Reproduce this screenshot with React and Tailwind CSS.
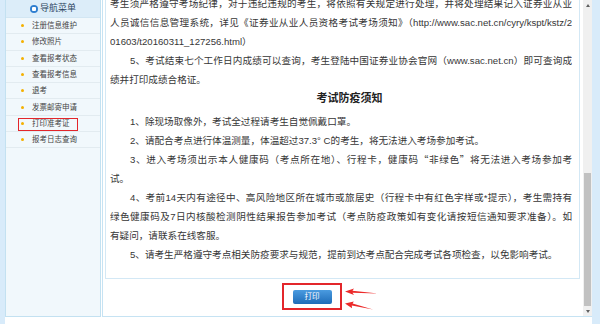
const menu = ['注册信息维护', '修改照片', '查看报考状态', '查看报考信息', '退考', '发票邮寄申请', '打印准考证', '报考日志查询'];

// [text, indent, justify]
const lines = [
  ['考生须严格遵守考场纪律，对于违纪违规的考生，将依照有关规定进行处理，并将处理结果记入证券业从业', false, true],
  ['人员诚信信息管理系统，详见《证券业从业人员资格考试考场须知》（http://www.sac.net.cn/cyry/kspt/kstz/2', false, true],
  ['01603/t20160311_127256.html）', false, false],
  ['5、考试结束七个工作日内成绩可以查询，考生登陆中国证券业协会官网（www.sac.net.cn）即可查询成', true, true],
  ['绩并打印成绩合格证。', false, false],
];

const lines2 = [
  ['1、除现场取像外，考试全过程请考生自觉佩戴口罩。', true, false],
  ['2、请配合考点进行体温测量，体温超过37.3° C的考生，将无法进入考场参加考试。', true, false],
  [<>3、进入考场须出示本人健康码（考点所在地）、行程卡，健康码<span style={{ fontFamily: '"Noto Sans CJK SC", sans-serif' }}>“非绿色”</span>将无法进入考场参加考</>, true, true],
  ['试。', false, false],
  ['4、考前14天内有途径中、高风险地区所在城市或旅居史（行程卡中有红色字样或*提示），考生需持有', true, true],
  ['绿色健康码及7日内核酸检测阴性结果报告参加考试（考点防疫政策如有变化请按短信通知要求准备）。如', false, true],
  ['有疑问，请联系在线客服。', false, false],
  ['5、请考生严格遵守考点相关防疫要求与规范，提前到达考点配合完成考试各项检查，以免影响考试。', true, false],
];

function Line({ text, indent, justify }) {
  return (
    <div
      className={`h-[19px] leading-[19px] overflow-hidden ${indent ? 'pl-[20px]' : ''} ${justify ? 'text-justify [text-align-last:justify]' : ''}`}
    >
      {text}
    </div>
  );
}

export default function App() {
  return (
    <div className="relative w-[600px] h-[324px] overflow-hidden bg-white flex text-[#363636]" style={{ fontFamily: '"Liberation Sans", "Noto Sans CJK SC", sans-serif' }}>
      <div className="w-[5px] shrink-0 bg-[#d8ebfa]" />

      {/* sidebar */}
      <aside className="w-[96px] h-[317px] shrink-0 border border-t-0 border-[#c3e1f1] bg-[#f1f8fc]">
        <div className="h-[18px] flex items-center justify-center gap-[2px] bg-[#dcedf9] border-b border-[#d2e6f3]">
          <span className="w-[8px] h-[8px] rounded-full bg-[#2f7fd0] flex items-center justify-center">
            <span className="w-[4px] h-[4px] rounded-[1px] bg-white" />
          </span>
          <span className="text-[9px] text-[#2d4660]">导航菜单</span>
        </div>
        {menu.map((m, i) => (
          <div key={m} className="relative h-[16.3px] flex items-center border-b border-[#e2ebf0]">
            <span className="ml-[15px] w-[3px] h-[3px] rounded-full bg-[#f4b000]" />
            <span className="ml-[8px] text-[7.5px] text-[#444]">{m}</span>
            {i === 6 && (
              <span className="absolute left-[12px] top-[2px] w-[60px] h-[13px] border-[1.5px] border-[#e3262b]" />
            )}
          </div>
        ))}
      </aside>

      <div className="w-[1px] shrink-0" />

      {/* main panel */}
      <main className="w-[490px] h-[317px] shrink-0 flex border-l border-b border-[#c6e3f3]">
        <div className="flex-1 flex flex-col">
          <div className="ml-[2px] mr-[3px] h-[279px] shrink-0 overflow-hidden border-x border-b border-[#d3e8f5] pl-[4px] pr-[7px] text-[9.6px]">
            <div className="mt-[-6px]">
              {lines.map(([t, i, j], k) => (
                <Line key={k} text={t} indent={i} justify={j} />
              ))}
              <div className="h-[19px] leading-[19px] mb-[4px] text-center pl-[17px] text-[11px] font-bold text-[#222]">考试防疫须知</div>
              {lines2.map(([t, i, j], k) => (
                <Line key={k} text={t} indent={i} justify={j} />
              ))}
            </div>
          </div>
          <div className="pt-[4px] pl-[179px]">
            <div className="w-[60px] h-[27px] border-2 border-[#e3262b] flex items-center justify-center">
              <button className="w-[39px] h-[14px] rounded-[2px] bg-gradient-to-b from-[#4a9be0] to-[#1d6cb8] text-white text-[7.5px] leading-none">打印</button>
            </div>
          </div>
        </div>

        {/* scrollbar */}
        <div className="w-[9px] shrink-0 bg-[#f0f0f0] flex flex-col">
          <div className="h-[11px] flex items-center justify-center">
            <span className="w-0 h-0 border-x-[2.5px] border-x-transparent border-b-[3px] border-b-[#606060]" />
          </div>
          <div className="flex-1 px-[1px]">
            <div className="mt-[162px] h-[133px] bg-[#c1c1c1]" />
          </div>
          <div className="h-[10px] flex items-center justify-center">
            <span className="w-0 h-0 border-x-[2.5px] border-x-transparent border-t-[3px] border-t-[#606060]" />
          </div>
        </div>
      </main>

      <div className="flex-1 bg-[#d8ebfa]" />

      {/* annotation arrows */}
      <svg className="absolute left-0 top-0 pointer-events-none" width="600" height="324" viewBox="0 0 600 324">
        <polygon points="345,291.5 354,288.6 352.5,290.7 378,293.6 352.5,292.7 354,295" fill="#ec2a2a" />
        <polygon points="345,303.5 353.8,301.4 352.6,303.5 373,309.6 351.8,305.4 352,308.2" fill="#ec2a2a" />
      </svg>
    </div>
  );
}
